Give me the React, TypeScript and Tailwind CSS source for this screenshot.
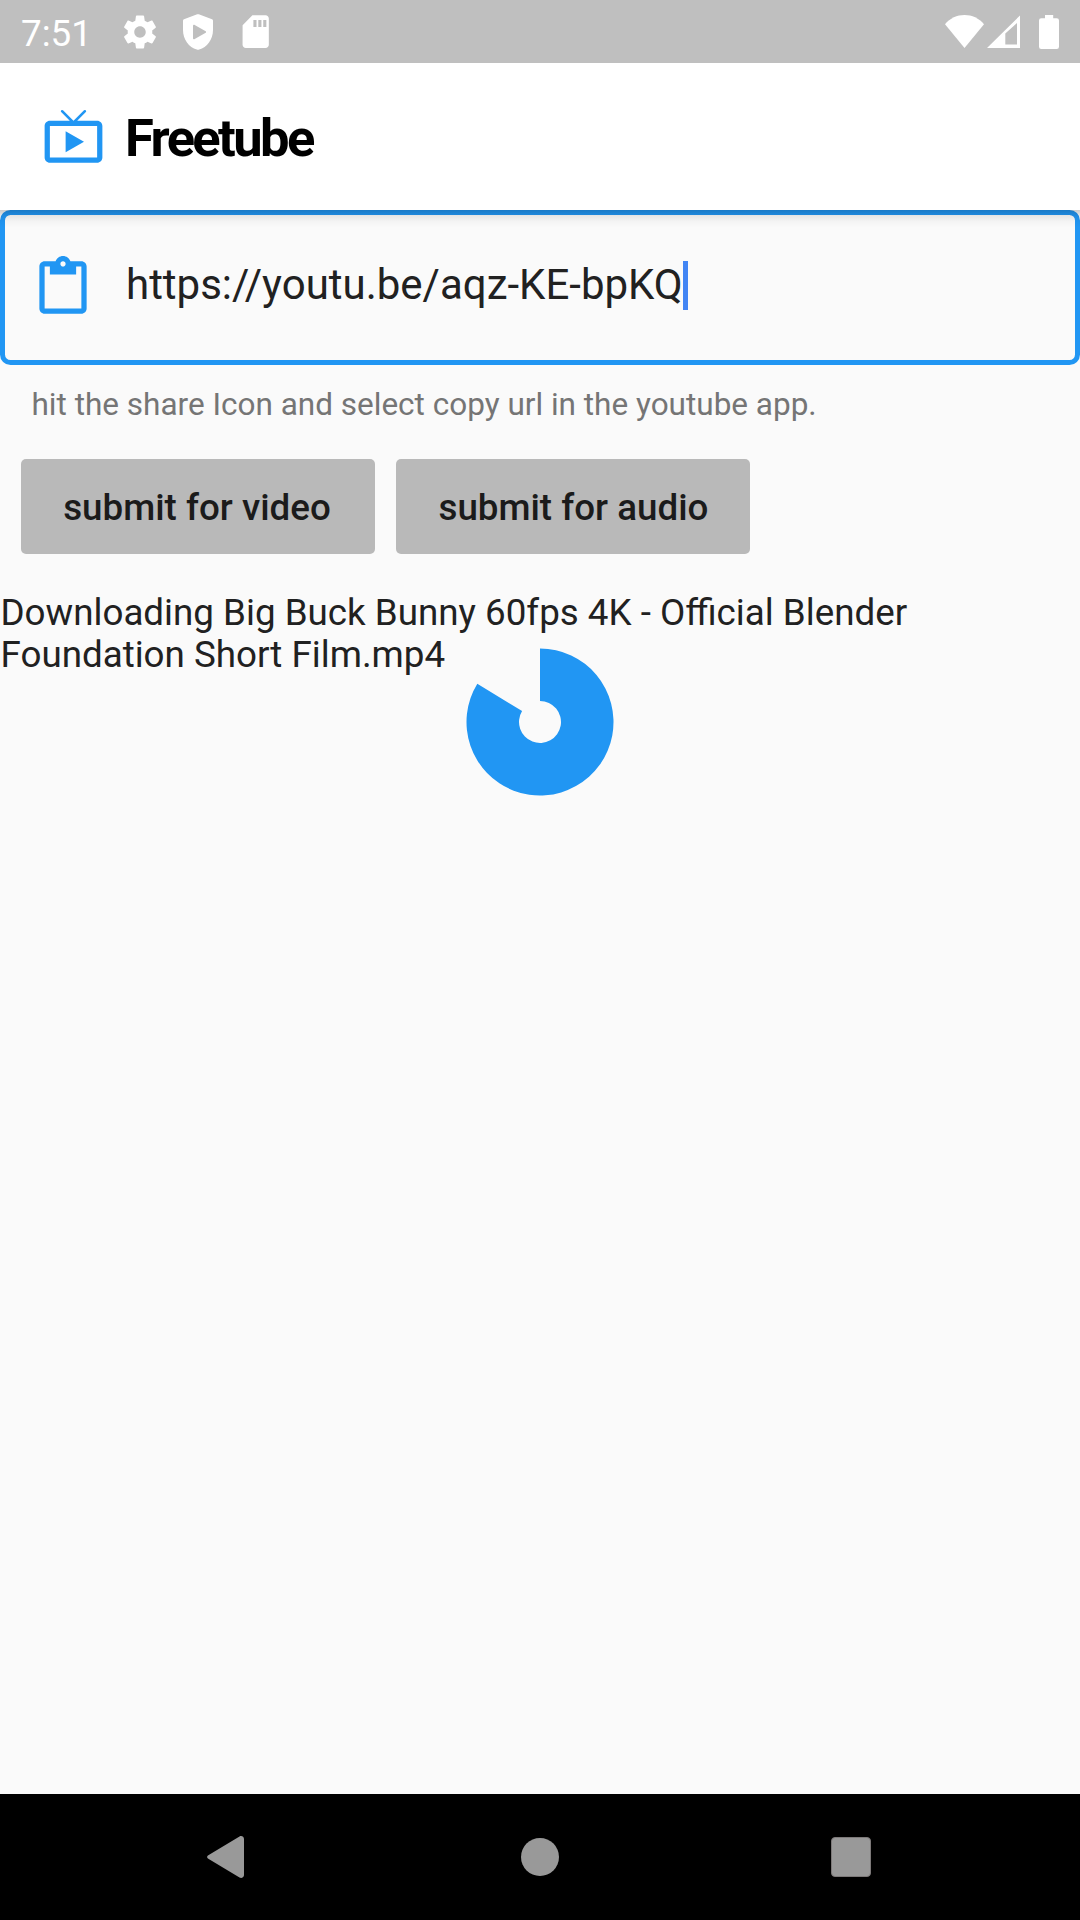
import type { ReactNode } from "react";

function MaterialIcon({
  className,
  viewBox = "0 0 24 24",
  children,
}: {
  className: string;
  viewBox?: string;
  children: ReactNode;
}) {
  return (
    <svg viewBox={viewBox} fill="currentColor" className={className}>
      {children}
    </svg>
  );
}

function StatusBar() {
  return (
    <div className="flex h-[63px] items-center bg-[#bfbfbf] pl-[21px] pr-[21px] text-white">
      <span className="w-[99px] pt-[5px] text-[36.75px] leading-[56px]">7:51</span>
      <MaterialIcon viewBox="-0.2 -0.2 24.4 24.4" className="size-10">
        <path d="M19.43 12.98c.04-.32.07-.64.07-.98s-.03-.66-.07-.98l2.11-1.65c.19-.15.24-.42.12-.64l-2-3.46c-.12-.22-.39-.3-.61-.22l-2.49 1c-.52-.4-1.08-.73-1.69-.98l-.38-2.65C14.46 2.18 14.25 2 14 2h-4c-.25 0-.46.18-.49.42l-.38 2.65c-.61.25-1.17.59-1.69.98l-2.49-1c-.23-.09-.49 0-.61.22l-2 3.46c-.13.22-.07.49.12.64l2.11 1.65c-.04.32-.07.65-.07.98s.03.66.07.98l-2.11 1.65c-.19.15-.24.42-.12.64l2 3.46c.12.22.39.3.61.22l2.49-1c.52.4 1.08.73 1.69.98l.38 2.65c.03.24.24.42.49.42h4c.25 0 .46-.18.49-.42l.38-2.65c.61-.25 1.17-.59 1.69-.98l2.49 1c.23.09.49 0 .61-.22l2-3.46c.12-.22.07-.49-.12-.64l-2.11-1.65zM12 15.5c-1.93 0-3.5-1.57-3.5-3.5s1.57-3.5 3.5-3.5 3.5 1.57 3.5 3.5-1.57 3.5-3.5 3.5z" />
      </MaterialIcon>
      <svg viewBox="0 0 30 36" fill="currentColor" className="ml-[23px] h-9 w-[30px]">
        <path
          fillRule="evenodd"
          d="M14.2.3a2.2 2.2 0 0 1 1.6 0L29 5.2q1 .4 1 1.5V16c0 9.500-6 17.300-13.800 19.600a4 4 0 0 1-2.400 0C6 33.300 0 25.500 0 16V6.700q0-1.100 1-1.500zM10 12.800v11.400c0 .9.900 1.400 1.700.9l11-6.400a.8.8 0 0 0 0-1.400l-11-6.400c-.800-.5-1.700 0-1.700.9z"
        />
      </svg>
      <MaterialIcon className="ml-[22.8px] size-[39.4px]">
        <path d="M18 2h-8L4.020 8 4 20c0 1.100.9 2 2 2h12c1.100 0 2-.9 2-2V4c0-1.100-.9-2-2-2zm-5.500 7.100h-1.900V4.800h1.900v4.300zm3 0h-1.900V4.800h1.900v4.300zm3 0h-1.900V4.800h1.900v4.300z" />
      </MaterialIcon>
      <div className="ml-auto flex items-center">
        <svg viewBox="0 0 39 33" fill="currentColor" className="h-[33px] w-[39px]">
          <path d="M0 9.200C5 3.200 12 0 19.500 0S34 3.200 39 9.200L19.500 33z" />
        </svg>
        <svg viewBox="0 0 33 33" fill="currentColor" className="ml-[3px] h-[33px] w-[33px]">
          <path fillRule="evenodd" d="M0 33 33 .4V33zM18.300 18.500v11H30V8z" />
        </svg>
        <svg viewBox="0 0 20 34" fill="currentColor" className="ml-[19px] h-[34px] w-5">
          <path d="M6 0h8.200v3.300h3.500A2.300 2.300 0 0 1 20 5.600v26.100a2.300 2.300 0 0 1-2.300 2.300H2.300A2.300 2.300 0 0 1 0 31.700V5.600a2.300 2.300 0 0 1 2.300-2.300H6z" />
        </svg>
      </div>
    </div>
  );
}

function AppBar() {
  return (
    <header className="relative z-10 flex h-[147px] items-center bg-white pl-[42px]">
      <MaterialIcon className="size-[63px] text-[#2196f3]">
        <path d="M21 6h-7.590l3.290-3.290a.5.5 0 0 0-.7-.71l-4 4-4-4a.5.5 0 0 0-.7.710L10.590 6H3c-1.100 0-2 .89-2 2v12c0 1.100.9 2 2 2h18c1.100 0 2-.9 2-2V8c0-1.110-.9-2-2-2zm0 14H3V8h18v12zM9 10v8l7-4z" />
      </MaterialIcon>
      <h1 className="ml-5 pt-[3px] text-[52.5px] font-bold leading-[60px] tracking-[-2.625px] text-black">
        Freetube
      </h1>
      <div className="absolute inset-x-0 top-full h-[18px] bg-[linear-gradient(to_bottom,rgba(0,0,0,0.19)_0%,rgba(0,0,0,0.08)_33%,rgba(0,0,0,0.025)_65%,rgba(0,0,0,0)_100%)]" />
    </header>
  );
}

function UrlField() {
  return (
    <div>
      <div className="flex h-[155px] items-center rounded-[10.5px] border-5 border-[#2196f3] pl-[26px]">
        <MaterialIcon viewBox="-0.19 0 24.38 24" className="h-[63px] w-16 text-[#2196f3]">
          <path d="M19 2h-4.180C14.400.84 13.300 0 12 0c-1.300 0-2.400.84-2.820 2H5c-1.100 0-2 .9-2 2v16c0 1.100.9 2 2 2h14c1.100 0 2-.9 2-2V4c0-1.100-.9-2-2-2zm-7 0c.55 0 1 .45 1 1s-.45 1-1 1-1-.45-1-1 .45-1 1-1zm7 18H5V4h2v3h10V4h2v16z" />
        </MaterialIcon>
        <div className="ml-[31px] flex items-center pb-1">
          <span className="pb-0.5 text-[42px] leading-[49px] text-[#212121]">https://youtu.be/aqz-KE-bpKQ</span>
          <span className="h-[49px] w-[5.5px] bg-[#4285f4]" />
        </div>
      </div>
      <p className="pl-[31.5px] pt-[21px] text-[31.5px] leading-[37px] text-[#757575]">
        hit the share Icon and select copy url in the youtube app.
      </p>
    </div>
  );
}

function SubmitButton({ children }: { children: ReactNode }) {
  return (
    <button className="h-[95px] w-[354.5px] rounded-[5px] bg-[#b9b9b9] pl-[42.5px] pt-px text-left text-[36.75px] font-medium leading-[43px] text-[#1b1b1b]">
      {children}
    </button>
  );
}

function DownloadProgress() {
  return (
    <svg viewBox="-74 -74 148 148" className="mx-auto -mt-[27.5px] size-[148px] text-[#2196f3]">
      <path
        fill="currentColor"
        d="M0-73.500A73.500 73.500 0 1 1-62.690-38.370L-17.910-10.960A21 21 0 1 0 0-21z"
      />
    </svg>
  );
}

function NavigationBar() {
  return (
    <nav className="flex h-[126px] items-center justify-between bg-black pl-[207px] pr-[209px] text-[#999999]">
      <svg viewBox="0 0 37 42" fill="currentColor" className="h-[42px] w-[37px]">
        <path d="M1.300 19.200 32.500.5C34.500-.6 37 .6 37 3v36c0 2.400-2.500 3.600-4.500 2.500L1.300 22.800c-1.600-1-1.600-2.600 0-3.600z" />
      </svg>
      <div className="ml-[5px] size-[38px] rounded-full bg-[#999999]" />
      <div className="size-10 rounded-[4px] border border-[#7d7979] bg-[#999999]" />
    </nav>
  );
}

export default function App() {
  return (
    <div className="flex h-[1920px] w-[1080px] flex-col overflow-hidden bg-[#fafafa] font-[Roboto,sans-serif]">
      <StatusBar />
      <AppBar />
      <main className="flex flex-1 flex-col">
        <UrlField />
        <div className="mt-9 flex gap-[20.8px] pl-[20.7px]">
          <SubmitButton>submit for video</SubmitButton>
          <SubmitButton>submit for audio</SubmitButton>
        </div>
        <p className="mt-[37.5px] w-[1080px] pl-[0.5px] text-[36.75px] leading-[42px] text-[#212121]">
          Downloading Big Buck Bunny 60fps 4K - Official Blender Foundation Short Film.mp4
        </p>
        <DownloadProgress />
      </main>
      <NavigationBar />
    </div>
  );
}
